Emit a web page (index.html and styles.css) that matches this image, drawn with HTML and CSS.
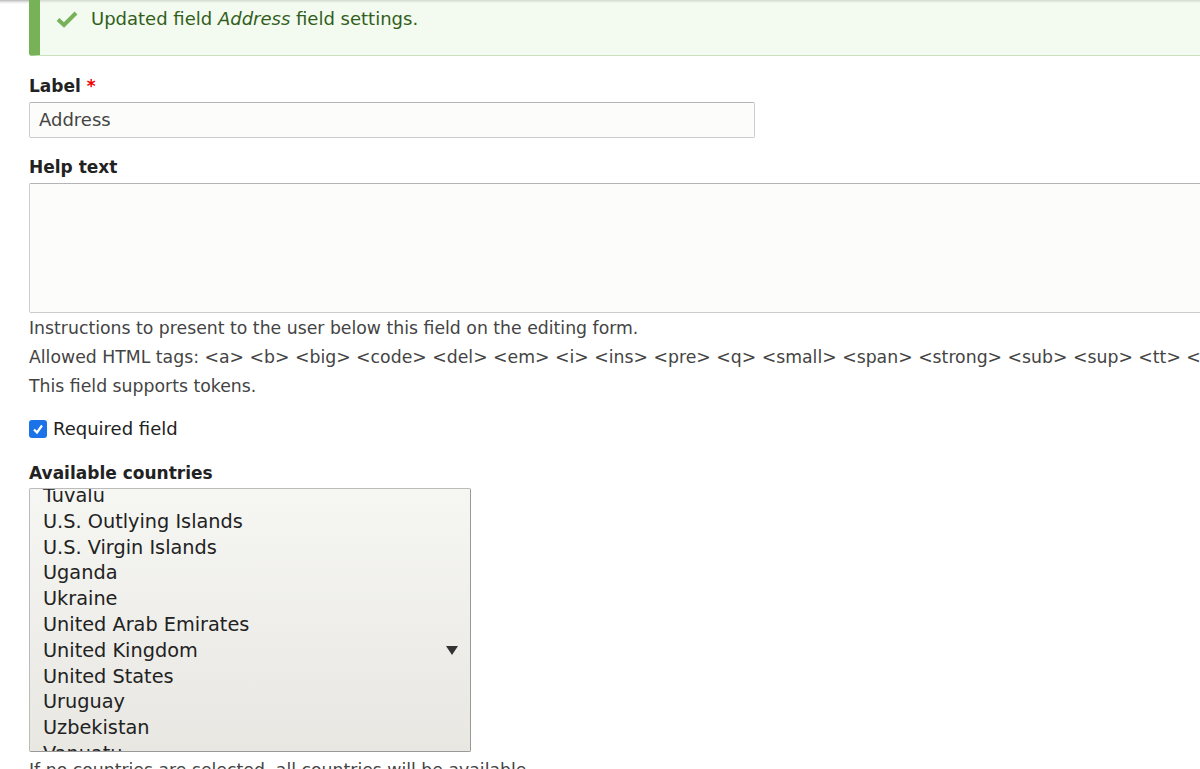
FILE: index.html
```html
<!DOCTYPE html>
<html>
<head>
<meta charset="utf-8">
<link rel="stylesheet" href="styles.css">
</head>
<body>
<div class="page">
  <div class="message">
    <svg class="check" width="22" height="18" viewBox="0 0 22 18"><path d="M2 9.5 L8 15 L20 3" fill="none" stroke="#77b259" stroke-width="4" stroke-linecap="butt" stroke-linejoin="miter"/></svg>
    <span>Updated field <em>Address</em> field settings.</span>
  </div>

  <div class="field f-label">
    <label class="lbl">Label <span class="req">*</span></label>
    <div class="input">Address</div>
  </div>

  <div class="field f-help">
    <label class="lbl">Help text</label>
    <div class="textarea"></div>
    <div class="desc">
      <div>Instructions to present to the user below this field on the editing form.</div>
      <div class="nowrap">Allowed HTML tags: &lt;a&gt; &lt;b&gt; &lt;big&gt; &lt;code&gt; &lt;del&gt; &lt;em&gt; &lt;i&gt; &lt;ins&gt; &lt;pre&gt; &lt;q&gt; &lt;small&gt; &lt;span&gt; &lt;strong&gt; &lt;sub&gt; &lt;sup&gt; &lt;tt&gt; &lt;ol&gt; &lt;ul&gt; &lt;li&gt; &lt;p&gt; &lt;br&gt; &lt;img&gt;</div>
      <div>This field supports tokens.</div>
    </div>
  </div>

  <div class="checkrow">
    <span class="cbox"><svg width="12" height="12" viewBox="0 0 12 12"><path d="M2 6.5 L5 9.5 L10 2.5" fill="none" stroke="#fff" stroke-width="2.2"/></svg></span>
    <span>Required field</span>
  </div>

  <div class="field f-countries">
    <label class="lbl">Available countries</label>
    <div class="listbox">
      <div class="items">
        <div>Tuvalu</div>
        <div>U.S. Outlying Islands</div>
        <div>U.S. Virgin Islands</div>
        <div>Uganda</div>
        <div>Ukraine</div>
        <div>United Arab Emirates</div>
        <div>United Kingdom</div>
        <div>United States</div>
        <div>Uruguay</div>
        <div>Uzbekistan</div>
        <div>Vanuatu</div>
      </div>
      <span class="arrow"></span>
    </div>
    <div class="desc after">If no countries are selected, all countries will be available.</div>
  </div>
</div>
</body>
</html>
```

FILE: styles.css
```css
html, body {
  margin: 0;
  padding: 0;
  background: #fff;
  overflow: hidden;
}
body {
  font-family: "DejaVu Sans", "Lucida Grande", Verdana, sans-serif;
  font-size: 16px;
  color: #333;
  width: 1200px;
  height: 769px;
  background-image: linear-gradient(to bottom, #b8b8b8 0, #e6e6e6 2px, #fff 4px);
  background-repeat: no-repeat;
}
.page {
  padding-left: 29px;
}
.message {
  display: flex;
  align-items: flex-start;
  box-sizing: border-box;
  height: 56px;
  padding: 6px 0 0 16px;
  width: 1400px;
  background: #f3faef;
  border-left: 11px solid #77b259;
  border-bottom: 1px solid #c9e1bd;
  border-radius: 0 0 0 3px;
  color: #325e1c;
  font-size: 18px;
  line-height: 26px;
  box-shadow: inset 0 3px 3px -2px rgba(0,0,0,0.18);
}
.message .check {
  margin-right: 13px;
  margin-top: 4px;
}
.message em { font-style: italic; }
.lbl {
  display: block;
  font-weight: bold;
  color: #222;
  font-size: 17px;
  line-height: 20px;
}
.req { color: #e00; }
.f-label { padding-top: 20px; }
.input {
  box-sizing: border-box;
  width: 726px;
  height: 36px;
  margin-top: 6px;
  border: 1px solid #ccc;
  border-top-color: #b4b4b4;
  border-radius: 2px;
  background: #fcfcfa;
  padding: 0 9px;
  line-height: 34px;
  font-size: 18px;
  color: #444;
}
.f-help { padding-top: 19px; }
.textarea {
  box-sizing: border-box;
  width: 1200px;
  height: 130px;
  margin-top: 6px;
  border: 1px solid #ccc;
  border-top-color: #b4b4b4;
  border-radius: 2px;
  background: #fcfcfa;
}
.desc {
  color: #444;
  font-size: 17.3px;
  line-height: 29px;
  margin-top: 1px;
}
.nowrap { white-space: nowrap; }
.checkrow {
  display: flex;
  align-items: center;
  margin-top: 18px;
  font-size: 18px;
  line-height: 20px;
  color: #222;
}
.cbox {
  width: 18px;
  height: 18px;
  border-radius: 3px;
  background: #1a73e8;
  display: inline-flex;
  align-items: center;
  justify-content: center;
  margin-right: 6px;
}
.f-countries { padding-top: 24px; }
.listbox {
  position: relative;
  box-sizing: border-box;
  width: 442px;
  height: 264px;
  margin-top: 5px;
  border: 1px solid #bbb;
  border-right-color: #999;
  border-bottom-color: #999;
  border-radius: 2px;
  background: linear-gradient(to bottom, #f6f6f3, #e8e7e2);
  overflow: hidden;
}
.items {
  margin-top: -6px;
  padding-left: 13px;
  font-size: 19.3px;
  line-height: 25.8px;
  color: #222;
}
.arrow {
  position: absolute;
  right: 12px;
  top: 157px;
  width: 0;
  height: 0;
  border-left: 6px solid transparent;
  border-right: 6px solid transparent;
  border-top: 9px solid #333;
}
.desc.after {
  margin-top: 4px;
}
```
